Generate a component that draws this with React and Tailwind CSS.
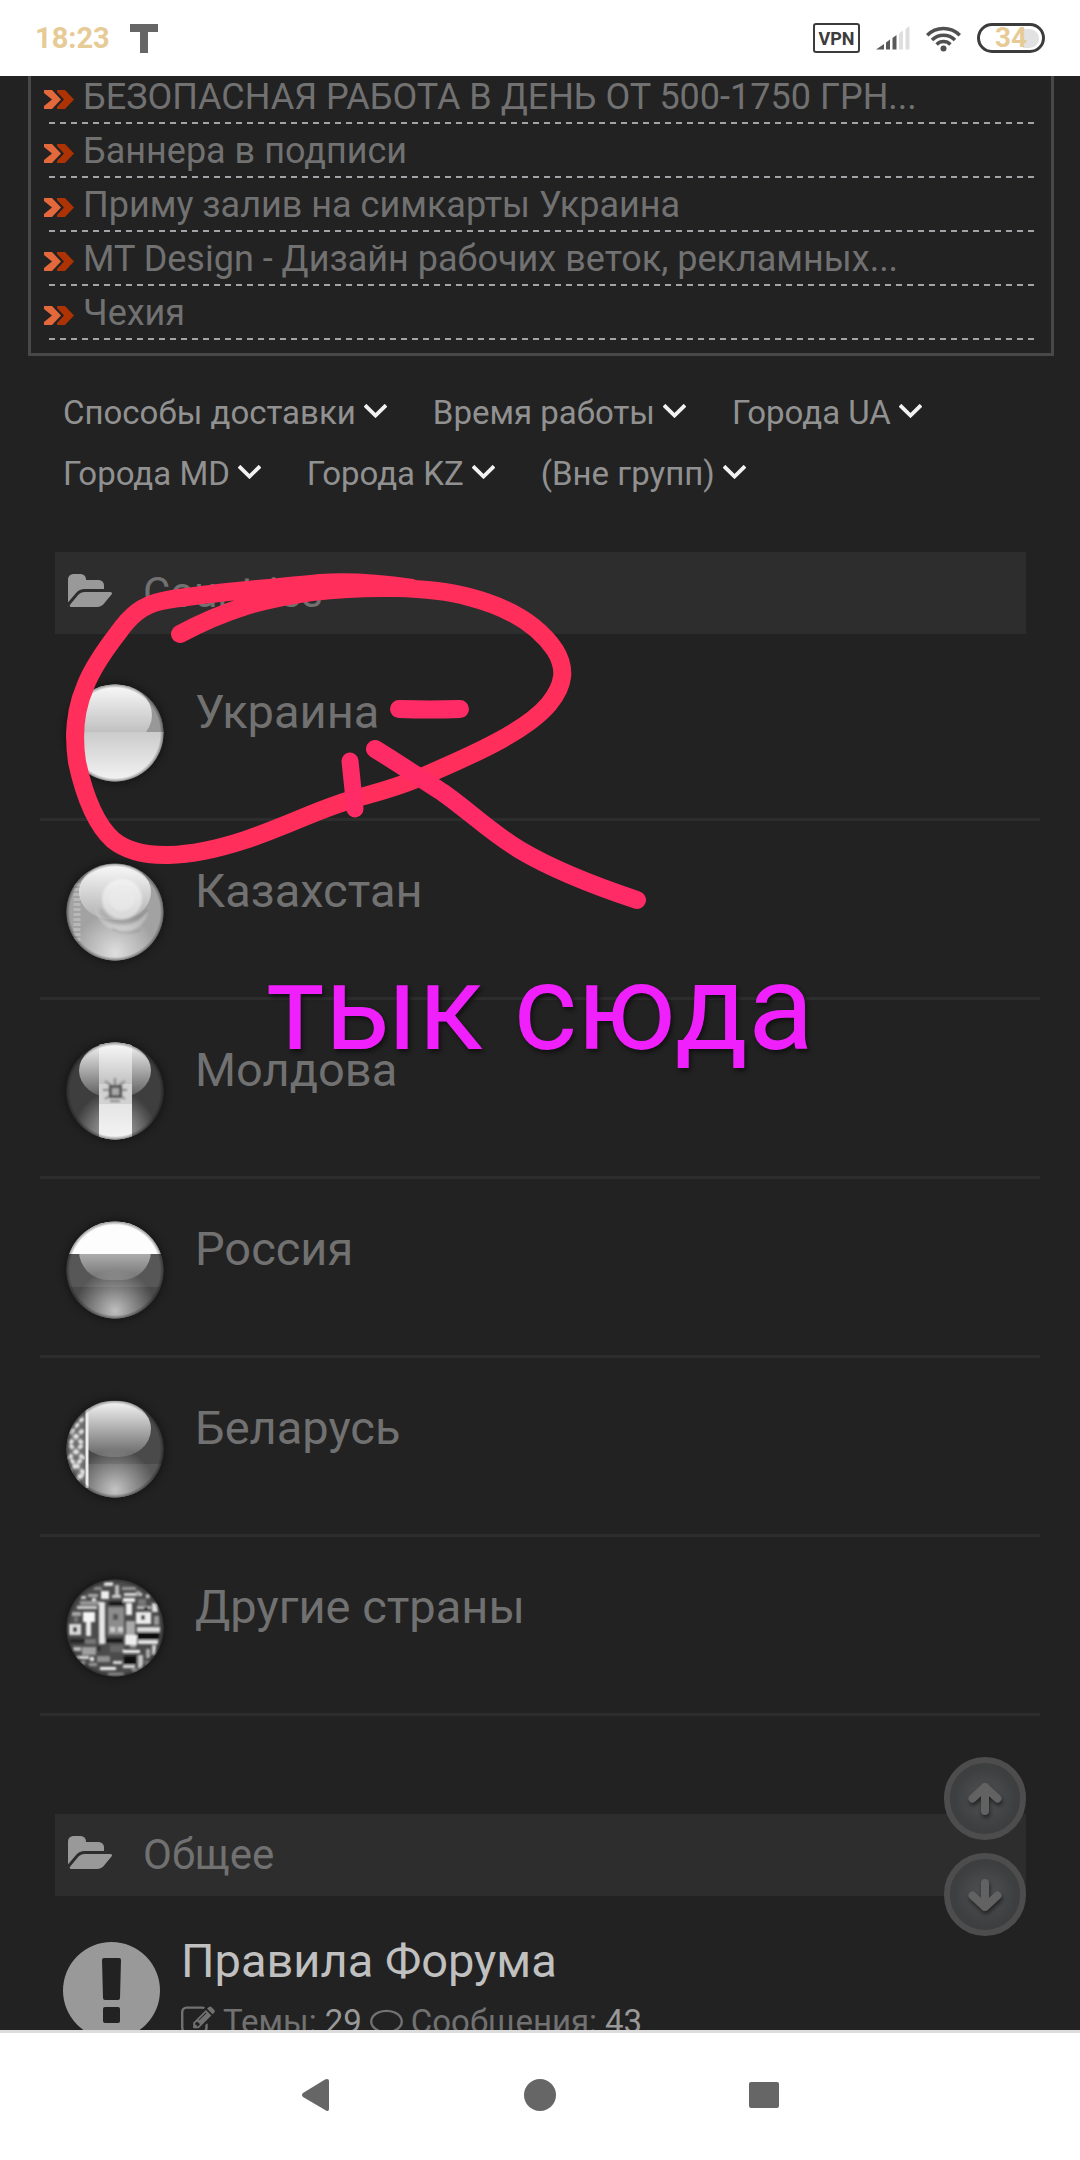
import React from 'react';

const notices = [
  'БЕЗОПАСНАЯ РАБОТА В ДЕНЬ ОТ 500-1750 ГРН...',
  'Баннера в подписи',
  'Приму залив на симкарты Украина',
  'MT Design - Дизайн рабочих веток, рекламных...',
  'Чехия',
];

const filters = [
  'Способы доставки',
  'Время работы',
  'Города UA',
  'Города MD',
  'Города KZ',
  '(Вне групп)',
];

const countries = [
  { id: 'ua', name: 'Украина' },
  { id: 'kz', name: 'Казахстан' },
  { id: 'md', name: 'Молдова' },
  { id: 'ru', name: 'Россия' },
  { id: 'by', name: 'Беларусь' },
  { id: 'other', name: 'Другие страны' },
];

const StatusBar = () => (
  <header className="flex h-[76px] shrink-0 items-center justify-between bg-white pl-[35px] pr-[35px]">
    <div className="flex items-center gap-5">
      <span className="text-[29px] leading-[30px] font-bold text-[#e6cb97]">18:23</span>
      <svg className="h-[29px] w-7" viewBox="0 0 28 29" fill="#666">
        <path d="M0 0h28v8h-10v21h-8V8H0z" />
      </svg>
    </div>
    <div className="flex items-center gap-4">
      <span className="flex h-[30px] w-[47px] items-center justify-center rounded-[3px] border-2 border-[#3c3c3c] text-[18px] font-bold text-[#3c3c3c]">
        VPN
      </span>
      <svg className="h-6 w-[34px]" viewBox="0 0 34 24" fill="#5a5a5a">
        <path d="M0 23.500L8 18v5.500zM10 16.500l4-3v10h-4zM16.500 12l4-3v14.500h-4z" />
        <path d="M23 7.500l4-3v19h-4zM29.500 3l4-3v23.500h-4z" fill="#dedede" />
      </svg>
      <svg className="h-[27px] w-[35px]" viewBox="0 0 35 27" fill="none" stroke="#505050" strokeWidth="3.500">
        <path d="M1.200 10.200a23 23 0 0 1 32.600 0M6 15a16.300 16.300 0 0 1 23 0M10.600 19.400a9.800 9.800 0 0 1 13.800 0" />
        <circle cx="17.500" cy="23.500" r="3" fill="#505050" stroke="none" />
      </svg>
      <span className="relative flex h-[30px] w-[68px] items-center justify-center rounded-full border-3 border-[#3c3c3c]">
        <i className="absolute right-[3px] h-[19px] w-4 rounded-r-full bg-[#e2e2e2]" />
        <b className="relative text-[28px] leading-[28px] text-[#e6cb97]">34</b>
      </span>
    </div>
  </header>
);

const DoubleArrow = () => (
  <svg className="mt-1.5 h-[19px] w-[30px] shrink-0" viewBox="0 0 30 19">
    <path d="M0 0h8l9 9.500L8 19H0v-3l8-6.500L0 3z" fill="#e3693c" />
    <path d="M13 0h8l9 9.500L21 19h-8v-2l7-7.500L13 2z" fill="#ad3204" />
  </svg>
);

const Notices = () => (
  <ul className="-mt-[5px] ml-7 mr-[26px] border-x-3 border-b-3 border-[#484848] pl-[13px] pr-4 pb-3">
    {notices.map((title) => (
      <li key={title} className="h-[54px]">
        <a href="#" className="flex h-[51px] items-center gap-[9px] text-[36px] leading-[42px] whitespace-nowrap text-[#717171]">
          <DoubleArrow />
          {title}
        </a>
        <div className="h-[2px] bg-[repeating-linear-gradient(90deg,transparent_0_5px,#a4a4a8_5px_11px)]" />
      </li>
    ))}
  </ul>
);

const Filters = () => (
  <nav className="mt-[26px] flex flex-wrap gap-x-[46px] px-[63px]">
    {filters.map((name) => (
      <button key={name} type="button" className="flex h-[61px] items-center gap-2 text-[33px] leading-[39px] text-[#919191]">
        {name}
        <svg className="-mt-1 h-3.5 w-[23px]" viewBox="0 0 23 14" fill="none" stroke="#f2f2f2" strokeWidth="3.800">
          <path d="M1 1.200l10.500 10.300L22 1.200" />
        </svg>
      </button>
    ))}
  </nav>
);

const SectionHeader = ({ title }) => (
  <h2 className="ml-[55px] mr-[54px] flex h-[82px] items-center gap-[30px] bg-[#2d2d2d] pl-[13px] text-[42px] leading-[46px] text-[#717171]">
    <svg className="-mt-0.5 h-[42px] w-[45px]" viewBox="0 0 1920 1792" fill="#999">
      <path d="M1879 952q0 31-31 66l-336 396q-43 51-120.500 86.500t-143.500 35.500h-1088q-34 0-60.500-13t-26.500-43q0-31 31-66l336-396q43-51 120.500-86.500t143.500-35.500h1088q34 0 60.500 13t26.500 43zm-343-344v160h-832q-94 0-197 47.500t-164 119.500l-337 396-5 6q0-4-.5-12.500t-.5-12.500v-960q0-92 66-158t158-66h320q92 0 158 66t66 158v32h544q92 0 158 66t66 158z" />
    </svg>
    {title}
  </h2>
);

const Defs = () => (
  <svg className="absolute h-0 w-0" aria-hidden="true">
    <defs>
      <clipPath id="ball"><circle cx="49" cy="49" r="48.500" /></clipPath>
      <filter id="soft"><feGaussianBlur stdDeviation="0.800" /></filter>
      <linearGradient id="gloss" x1="0" y1="0" x2="0" y2="1">
        <stop offset="0" stopColor="#fff" stopOpacity=".95" />
        <stop offset="1" stopColor="#fff" stopOpacity=".15" />
      </linearGradient>
      <radialGradient id="glow" cx=".5" cy=".92" r=".42">
        <stop offset="0" stopColor="#fff" stopOpacity=".65" />
        <stop offset="1" stopColor="#fff" stopOpacity="0" />
      </radialGradient>
      <radialGradient id="rim" cx=".5" cy=".5" r=".5">
        <stop offset=".92" stopColor="#111" stopOpacity="0" />
        <stop offset="1" stopColor="#111" stopOpacity=".5" />
      </radialGradient>
      <linearGradient id="uaTop" x1="0" y1="0" x2="0" y2="1">
        <stop offset="0" stopColor="#fafafa" />
        <stop offset=".75" stopColor="#c2c2c2" />
      </linearGradient>
      <linearGradient id="uaBottom" x1="0" y1="0" x2="0" y2="1">
        <stop offset="0" stopColor="#cbcbcb" />
        <stop offset="1" stopColor="#f4f4f4" />
      </linearGradient>
    </defs>
  </svg>
);

// rows of the flag mosaic: x, y, width, height, shade
const mosaic = [
  [38, 3, 9, 4, '#ddd'], [49, 6, 4, 10, '#bbb'], [56, 8, 14, 3, '#999'], [28, 8, 8, 3, '#888'],
  [22, 15, 10, 3, '#aaa'], [35, 12, 8, 8, '#eee'], [46, 16, 9, 3, '#ccc'], [58, 14, 18, 3, '#ddd'],
  [14, 22, 20, 4, '#999'], [57, 19, 12, 4, '#eee'], [72, 20, 8, 6, '#777'], [33, 23, 6, 42, '#e5e5e5'],
  [43, 23, 14, 3, '#080808'], [42, 28, 16, 28, '#8c8c8c'], [60, 24, 6, 12, '#f0f0f0'], [11, 27, 20, 3, '#d0d0d0'],
  [71, 27, 14, 3, '#bbb'], [86, 24, 6, 9, '#ddd'], [6, 33, 9, 4, '#aaa'], [17, 33, 12, 10, '#f4f4f4'],
  [20, 43, 5, 14, '#e9e9e9'], [70, 33, 15, 12, '#ededed'], [75, 36, 4, 5, '#444'], [88, 37, 5, 9, '#999'],
  [3, 45, 12, 11, '#ddd'], [7, 48, 4, 5, '#333'], [47, 35, 5, 6, '#555'], [44, 48, 5, 5, '#ccc'],
  [52, 48, 5, 5, '#ccc'], [60, 42, 9, 18, '#aaa'], [71, 48, 23, 5, '#ddd'], [71, 54, 22, 6, '#080808'],
  [4, 60, 15, 4, '#222'], [19, 60, 11, 5, '#777'], [59, 56, 12, 10, '#eee'], [72, 61, 20, 4, '#e6e6e6'],
  [39, 60, 18, 3, '#111'], [44, 66, 14, 7, '#666'], [7, 68, 8, 4, '#bbb'], [16, 68, 14, 8, '#a0a0a0'],
  [57, 71, 17, 3, '#f2f2f2'], [86, 66, 4, 10, '#ccc'], [10, 77, 13, 3, '#ddd'], [31, 77, 13, 6, '#909090'],
  [58, 77, 12, 8, '#0a0a0a'], [72, 76, 5, 14, '#c5c5c5'], [23, 84, 8, 3, '#999'], [47, 82, 9, 3, '#ddd'],
  [34, 88, 16, 3, '#f4f4f4'], [57, 86, 12, 3, '#ddd'], [42, 94, 16, 3, '#999'], [79, 82, 6, 5, '#888'],
  [8, 38, 4, 5, '#777'], [30, 67, 5, 5, '#333'], [70, 12, 4, 5, '#aaa'], [78, 28, 4, 3, '#111'],
  [15, 17, 5, 3, '#ccc'], [26, 19, 4, 3, '#ddd'], [80, 15, 4, 4, '#ccc'], [64, 66, 6, 3, '#999'],
  [80, 70, 4, 9, '#aaa'], [14, 82, 5, 4, '#aaa'], [24, 78, 4, 4, '#eee'], [66, 90, 6, 3, '#aaa'],
];

const FlagArt = ({ id }) => {
  if (id === 'ua') {
    return (
      <>
        <rect width="98" height="49" fill="#989898" />
        <rect x="12" y="0" width="74" height="62" rx="36" fill="url(#uaTop)" />
        <rect y="48" width="98" height="50" fill="url(#uaBottom)" />
      </>
    );
  }
  if (id === 'kz') {
    return (
      <>
        <rect width="98" height="98" fill="#a2a2a2" />
        <path d="M11 20v58" stroke="#b8b8b8" strokeWidth="7" strokeDasharray="3 2" />
        <g filter="url(#soft)">
          <path d="M28 42q6 20 27 20t28-18q-4 25-27 24T28 42z" fill="#bcbcbc" />
          <path d="M34 46q8 13 22 13t26-12M46 66q14 7 28 1" fill="none" stroke="#8e8e8e" strokeWidth="2" />
          <circle cx="56" cy="36" r="20" fill="#cfcfcf" />
        </g>
        <rect x="13" y="1" width="72" height="56" rx="34" fill="url(#gloss)" />
        <circle cx="56" cy="35" r="13" fill="#ebebeb" opacity=".6" filter="url(#soft)" />
        <rect width="98" height="98" fill="url(#glow)" />
      </>
    );
  }
  if (id === 'md') {
    return (
      <>
        <rect width="98" height="98" fill="#3e3e3e" />
        <rect x="13" y="1" width="72" height="55" rx="34" fill="url(#gloss)" />
        <rect width="98" height="98" fill="url(#glow)" />
        <rect x="33" width="33" height="98" fill="url(#uaBottom)" />
        <rect x="33" width="33" height="56" fill="url(#uaTop)" />
        <rect x="33" y="42" width="33" height="20" fill="#d2d2d2" />
        <g filter="url(#soft)">
          <path d="M39 39l7 5M59 39l-7 5M49 36v7M37 48h6M55 48h6M39 57l6-4M59 57l-6-4M44 59l10 0" stroke="#888" strokeWidth="2" />
          <rect x="44.500" y="44.500" width="10" height="10" fill="#aaa" stroke="#555" strokeWidth="3" />
        </g>
      </>
    );
  }
  if (id === 'ru') {
    return (
      <>
        <rect width="98" height="98" fill="#575757" />
        <rect x="13" y="1" width="72" height="58" rx="29" fill="url(#gloss)" />
        <rect width="98" height="33" fill="#fdfdfd" />
        <rect y="66" width="98" height="32" fill="#4a4a4a" />
        <rect width="98" height="98" fill="url(#glow)" />
      </>
    );
  }
  if (id === 'by') {
    return (
      <>
        <rect width="98" height="98" fill="#4a4a4a" />
        <rect y="64" width="98" height="34" fill="#585858" />
        <rect x="12" y="1" width="73" height="56" rx="32" fill="url(#gloss)" />
        <rect width="98" height="98" fill="url(#glow)" />
        <rect width="20" height="98" fill="#6c6c6c" />
        <g filter="url(#soft)">
          <path d="M3 30l14 14-14 14 14 14-8 10M17 18L5 32M17 30L3 44l14 14L3 72M17 74l-7 8" fill="none" stroke="#e4e4e4" strokeWidth="4" strokeDasharray="5 2" />
        </g>
        <path d="M21 8v80" stroke="#ededed" strokeWidth="3" />
      </>
    );
  }
  return (
    <>
      <rect width="98" height="98" fill="#4b4b4b" />
      <g filter="url(#soft)">
        {mosaic.map(([x, y, w, h, fill]) => (
          <rect key={`${x}-${y}`} x={x} y={y} width={w} height={h} fill={fill} />
        ))}
      </g>
    </>
  );
};

const Flag = ({ id }) => (
  <svg className="h-[98px] w-[98px] shrink-0 rounded-full shadow-[0_0_6px_2px_#171717]" viewBox="0 0 98 98">
    <g clipPath="url(#ball)">
      <FlagArt id={id} />
      <circle cx="49" cy="49" r="49" fill="url(#rim)" />
    </g>
  </svg>
);

const CountryList = () => (
  <ul className="mx-10 pt-2">
    {countries.map(({ id, name }) => (
      <li key={id} className="flex h-[179px] items-start gap-[31px] border-b-3 border-[#2d2d2d] pt-[42px] pl-[26px]">
        <Flag id={id} />
        <a href="#" className="mt-1 text-[47px] leading-[48px] text-[#717171]">{name}</a>
      </li>
    ))}
  </ul>
);

const ForumRow = () => (
  <div className="flex items-start gap-[21px] pt-[46px] pl-[63px]">
    <svg className="h-[97px] w-[97px] shrink-0" viewBox="0 0 97 97">
      <circle cx="48.500" cy="48.500" r="48.500" fill="#999" />
      <path d="M41 16h15q2 0 2 2l-1 38q0 2-2 2H42q-2 0-2-2l-1-38q0-2 2-2zM42 65h13q2 0 2 2v12q0 2-2 2H42q-2 0-2-2V67q0-2 2-2z" fill="#222" />
    </svg>
    <div className="-mt-[5px]">
      <h3 className="text-[47px] leading-[48px]">
        <a href="#" className="text-[#c0c0c0]">Правила Форума</a>
      </h3>
      <p className="mt-[19px] flex items-center text-[33px] leading-[33px] text-[#717171]">
        <svg className="mr-2 h-[34px] w-[34px]" viewBox="0 0 1792 1792" fill="#717171">
          <path d="M888 1184l116-116-152-152-116 116v56h96v96h56zm440-720q-16-16-33 1l-350 350q-17 17-1 33t33-1l350-350q17-17 1-33zm80 594v190q0 119-84.500 203.500t-203.500 84.500h-832q-119 0-203.500-84.500t-84.500-203.500v-832q0-119 84.500-203.500t203.500-84.500h832q63 0 117 25 15 7 18 23 3 17-9 29l-49 49q-14 14-32 8-23-6-45-6h-832q-66 0-113 47t-47 113v832q0 66 47 113t113 47h832q66 0 113-47t47-113v-126q0-13 9-22l64-64q15-15 35-7t20 29zm-96-738l288 288-672 672h-288v-288zm444 132l-92 92-288-288 92-92q28-28 68-28t68 28l152 152q28 28 28 68t-28 68z" />
        </svg>
        Темы:
        <span className="ml-2 text-[#999]">29</span>
        <svg className="mx-2 h-[33px] w-[33px]" viewBox="0 0 1792 1792" fill="#717171">
          <path d="M896 384q-204 0-381.500 69.500t-282 187.500-104.500 255q0 112 71.500 213.500t201.500 175.500l87 50-27 96q-24 91-70 172 152-63 275-171l43-38 57 6q69 8 130 8 204 0 381.500-69.500t282-187.500 104.500-255-104.500-255-282-187.500-381.500-69.500zm896 512q0 174-120 321.500t-326 233-450 85.500q-70 0-145-8-198 175-460 242-49 14-114 22h-5q-15 0-27-10.500t-16-27.500v-1q-3-4-.5-12t2-10 4.500-9.500l6-9 7-8.500 8-9q7-8 31-34.500t34.500-38 31-39.500 32.500-51 27-59 26-76q-157-89-247.500-220t-90.500-281q0-174 120-321.500t326-233 450-85.500 450 85.500 326 233 120 321.500z" />
        </svg>
        Сообщения:
        <span className="ml-2 text-[#999]">43</span>
      </p>
    </div>
  </div>
);

const ScrollButton = ({ label, down }) => (
  <button
    type="button"
    aria-label={label}
    className="flex h-[83px] w-[82px] items-center justify-center rounded-full border-6 border-[#4d4d4d] bg-[radial-gradient(circle,#505356_0%,#3e3f40_60%,#3b3b3b_100%)]"
  >
    <svg className="h-9 w-9 overflow-visible drop-shadow-[1px_3px_2px_#222]" viewBox="0 0 36 36" fill="none" stroke="#626262" strokeWidth="8" strokeLinecap="round" strokeLinejoin="round">
      {down ? <path d="M18 6v24M5.500 18.500L18 30l12.500-11.500" /> : <path d="M18 30V6M5.500 17.500L18 6l12.500 11.500" />}
    </svg>
  </button>
);

// hand-drawn marker over the list
const Marker = () => (
  <>
    <svg className="pointer-events-none absolute top-[484px] left-[60px] h-[360px] w-[600px]" viewBox="60 560 600 360" fill="none" stroke="#ff2e5b" strokeWidth="18" strokeLinecap="round" strokeLinejoin="round">
      <path d="M180 634C225 610 262 599 312 592C365 586 430 586 469 597C508 607 538 625 555 650C566 668 565 684 549 704C527 730 480 752 419 778C390 790 370 794 354 799C318 809 290 825 245 840C190 858 140 862 113 840C92 821 82 785 77 762C73 735 75 710 85 687C92 668 108 646 118 633C130 616 142 605 162 601C200 593 262 589 320 583C352 581 385 584 412 588" />
      <g stroke="#ff2b66">
        <path d="M399 709Q430 710 460 709" />
        <path d="M350 761L355 809" strokeWidth="17" />
        <path d="M375 749C395 761 420 778 442 792C468 810 490 832 520 850C552 869 595 886 637 900" />
      </g>
    </svg>
    <p className="pointer-events-none absolute inset-x-0 top-[872px] text-center text-[121px] leading-[121px] text-[#f020fc] [text-shadow:2px_3px_4px_#111]">
      тык сюда
    </p>
  </>
);

const NavBar = () => (
  <footer className="flex h-[130px] shrink-0 items-center justify-center gap-[192px] border-t-3 border-[#dcdcdc] bg-white pb-1">
    <button type="button" aria-label="Назад">
      <svg className="h-8 w-8" viewBox="0 0 32 32" fill="#666">
        <path d="M27 0q2 0 2 2v28q0 3-3 1.500L3 18q-2-2 0-4L25 .5q1-.5 2-.5z" />
      </svg>
    </button>
    <button type="button" aria-label="Домой">
      <svg className="h-8 w-8" viewBox="0 0 32 32" fill="#666"><circle cx="16" cy="16" r="16" /></svg>
    </button>
    <button type="button" aria-label="Недавние">
      <svg className="h-8 w-8" viewBox="0 0 32 32" fill="#666"><rect x="1" y="3" width="30" height="26" rx="2" /></svg>
    </button>
  </footer>
);

const App = () => (
  <div className="flex h-screen flex-col bg-[#222] font-[Roboto,sans-serif]">
    <Defs />
    <StatusBar />
    <main className="relative min-h-0 flex-1 overflow-hidden">
      <Notices />
      <Filters />
      <section className="mt-12">
        <SectionHeader title="Countries" />
        <CountryList />
      </section>
      <section className="mt-[98px]">
        <SectionHeader title="Общее" />
        <ForumRow />
      </section>
      <div className="absolute right-[54px] bottom-[94px] flex flex-col gap-[13px]">
        <ScrollButton label="Вверх" />
        <ScrollButton label="Вниз" down />
      </div>
      <Marker />
    </main>
    <NavBar />
  </div>
);

export default App;
